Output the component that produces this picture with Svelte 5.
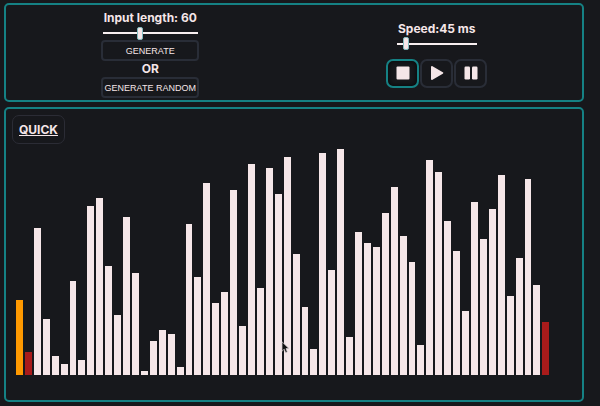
<script>
  let length = $state(60);
  let speed = $state(45);

  const values = [
    20, 6, 39, 15, 5, 3, 25, 4, 45, 47, 29, 16, 42, 27, 1,
    9, 12, 11, 2, 40, 26, 51, 19, 22, 49, 13, 56, 23, 55, 48,
    58, 32, 18, 7, 59, 28, 60, 10, 38, 35, 34, 43, 50, 37, 30,
    8, 57, 54, 41, 33, 17, 46, 36, 44, 53, 21, 31, 52, 24, 14
  ];
  const max = Math.max(...values);
  const pivot = 0;
  const compared = [1, 59];
</script>

<main>
  <section class="panel controls">
    <div class="group">
      <label for="length">Input length: {length}</label>
      <input id="length" class="wide" type="range" min="5" max="150" bind:value={length} />
      <button class="text-button">GENERATE</button>
      <span class="or">OR</span>
      <button class="text-button">GENERATE RANDOM</button>
    </div>
    <div class="group">
      <label for="speed">Speed:{speed} ms</label>
      <input id="speed" type="range" min="5" max="455" bind:value={speed} />
      <div class="player">
        <button class="active" aria-label="Stop">
          <svg viewBox="0 0 14 14"><rect x="0.5" y="0.5" width="13" height="13" rx="1" /></svg>
        </button>
        <button aria-label="Play">
          <svg viewBox="0 0 14 14"><path d="M1 1.1C1 .2 1.8-.2 2.5.3l10.3 6c.7.4.7 1 0 1.4l-10.3 6c-.7.5-1.5.1-1.5-.8z" /></svg>
        </button>
        <button aria-label="Pause">
          <svg viewBox="0 0 14 14"><rect x="0.5" y="0.5" width="5.5" height="13" rx="1.2" /><rect x="8" y="0.5" width="5.5" height="13" rx="1.2" /></svg>
        </button>
      </div>
    </div>
  </section>

  <section class="panel board">
    <button class="algorithm">QUICK</button>
    <div class="chart">
      {#each values as value, i}
        <div
          class="bar"
          class:pivot={i === pivot}
          class:compared={compared.includes(i)}
          style:height="{(value / max) * 100}%"
        ></div>
      {/each}
    </div>
  </section>

  <svg class="cursor" viewBox="0 0 9 13"><path d="M1 .8v9.4l2.2-2 1.4 3.4 1.7-.7L5 7.6h2.9z" /></svg>
</main>

<style>
  :global(body) {
    background: #17181c;
  }
  main {
    position: relative;
    box-sizing: border-box;
    height: 100vh;
    min-height: 320px;
    padding: 3px 16px 4px 4px;
    display: flex;
    flex-direction: column;
    gap: 5px;
    background: #17181c;
    color: #f5e6e8;
    font-family: Inter, "Liberation Sans", sans-serif;
    font-size: 12px;
    font-weight: 700;
  }
  .panel {
    box-sizing: border-box;
    border: 2px solid #158184;
    border-radius: 5px;
  }
  .controls {
    flex: none;
    display: grid;
    grid-template-columns: 1fr 1fr;
    align-items: center;
    padding: 5px 2px 2px 1px;
  }
  .group {
    display: flex;
    flex-direction: column;
    align-items: center;
  }
  label,
  .or {
    line-height: 16px;
  }
  button {
    box-sizing: border-box;
    margin: 0;
    border: 2px solid #292d37;
    border-radius: 7px;
    background: #17181c;
    color: #f5e6e8;
  }
  .text-button {
    width: 98px;
    height: 21px;
    padding: 0;
    border-radius: 4px;
    font: 9px "Liberation Sans", Arial, sans-serif;
    white-space: nowrap;
  }
  input {
    appearance: none;
    width: 80px;
    height: 14px;
    margin: 0;
    background: linear-gradient(#f8eff0, #f8eff0) center / 100% 2px no-repeat;
  }
  input.wide {
    width: 95px;
  }
  input::-webkit-slider-thumb {
    appearance: none;
    box-sizing: border-box;
    width: 6px;
    height: 13px;
    border: 1px solid #83bcc0;
    border-radius: 2px;
    background: #f5e6e8;
  }
  .player {
    display: flex;
    gap: 1px;
    margin-top: 8px;
  }
  .player button {
    display: grid;
    place-items: center;
    width: 33px;
    height: 29px;
    padding: 0;
  }
  .player .active {
    border-color: #158184;
    box-shadow: inset 0 0 5px 1px #090a0c;
  }
  .player svg {
    width: 14px;
    height: 14px;
    fill: #f5e6e8;
  }
  .board {
    flex: 1;
    display: flex;
    flex-direction: column;
    align-items: flex-start;
    padding: 6px 33px 25px 10px;
  }
  .algorithm {
    flex: none;
    height: 29px;
    margin-left: -4px;
    padding: 0 6px;
    border: 1px solid #2b2c35;
    font: inherit;
    text-decoration: underline;
  }
  .chart {
    flex: 1;
    align-self: stretch;
    display: flex;
    align-items: flex-end;
    gap: 2px;
    min-height: 0;
    margin-top: 5px;
  }
  .bar {
    flex: 1;
    background: #f5e6e8;
  }
  .pivot {
    background: #ff9900;
  }
  .compared {
    background: #a91b1b;
  }
  .cursor {
    position: absolute;
    left: 281px;
    top: 341px;
    width: 9px;
    height: 13px;
    fill: #111;
    stroke: #d8d0d2;
    stroke-width: 0.7;
  }
</style>
